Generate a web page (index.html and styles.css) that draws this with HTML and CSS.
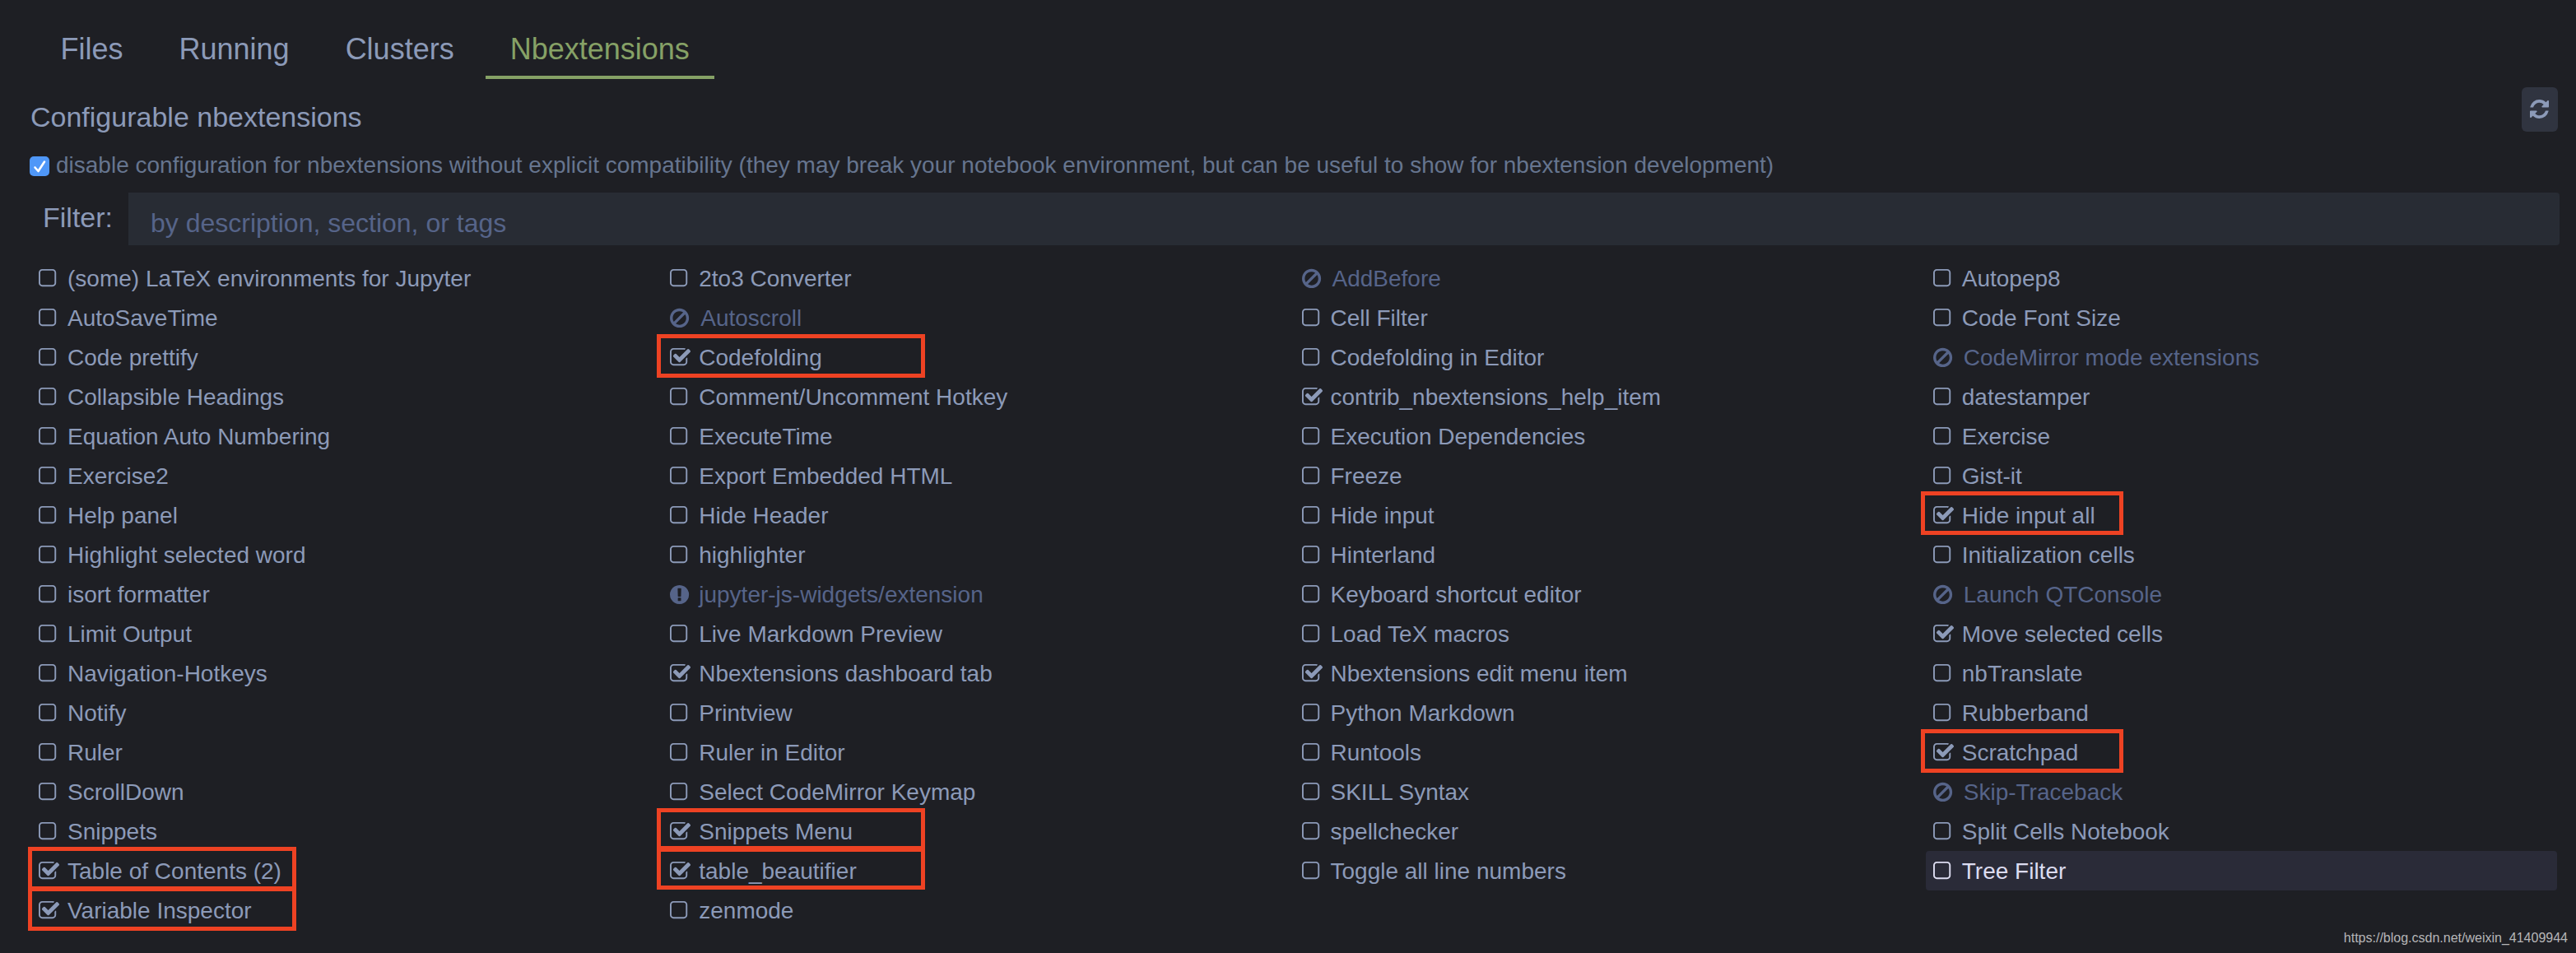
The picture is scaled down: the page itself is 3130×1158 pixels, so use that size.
FILE: index.html
```html
<!DOCTYPE html>
<html lang="en">
<head>
<meta charset="utf-8">
<title>Nbextensions</title>
<link rel="stylesheet" href="styles.css">
</head>
<body>
<svg class="defs" width="0" height="0">
  <symbol id="off" viewBox="192 0 1792 1792"><path d="M1312 256h-832q-66 0-113 47t-47 113v832q0 66 47 113t113 47h832q66 0 113-47t47-113v-832q0-66-47-113t-113-47zm288 160v832q0 119-84.5 203.5t-203.5 84.5h-832q-119 0-203.5-84.5t-84.5-203.5v-832q0-119 84.5-203.5t203.5-84.5h832q119 0 203.5 84.5t84.5 203.5z"/></symbol>
  <symbol id="on" viewBox="64 0 1792 1792"><path d="M1472 930v318q0 119-84.5 203.5t-203.5 84.5h-832q-119 0-203.5-84.5t-84.5-203.5v-832q0-119 84.5-203.5t203.5-84.5h832q63 0 117 25 15 7 18 23 3 17-9 29l-49 49q-10 10-23 10-3 0-9-2-23-6-45-6h-832q-66 0-113 47t-47 113v832q0 66 47 113t113 47h832q66 0 113-47t47-113v-254q0-13 9-22l64-64q10-10 23-10 6 0 12 3 20 8 20 29zm231-489l-814 814q-24 24-57 24t-57-24l-430-430q-24-24-24-57t24-57l110-110q24-24 57-24t57 24l263 263 647-647q24-24 57-24t57 24l110 110q24 24 24 57t-24 57z"/></symbol>
  <symbol id="ban" viewBox="128 0 1792 1792"><path d="M1440 893q0-161-87-295l-754 753q137 89 297 89 111 0 211.5-43.5t173.5-116.5 116-174.5 43-212.5zm-999 299l755-754q-135-91-300-91-148 0-273 73t-198 199-73 274q0 162 89 299zm1223-299q0 157-61 300t-163.5 246-245 164-298.5 61-298.5-61-245-164-163.5-246-61-300 61-299.5 163.5-245.5 245-164 298.5-61 298.5 61 245 164 163.5 245.5 61 299.5z"/></symbol>
  <symbol id="warn" viewBox="128 0 1792 1792"><path d="M896 128q209 0 385.5 103t279.5 279.5 103 385.5-103 385.5-279.5 279.5-385.5 103-385.5-103-279.5-279.5-103-385.5 103-385.5 279.5-279.5 385.5-103zm128 1247v-190q0-14-9-23.5t-22-9.5h-192q-13 0-23 10t-10 23v190q0 13 10 23t23 10h192q13 0 22-9.5t9-23.5zm-2-344l18-621q0-12-10-18-10-8-24-8h-220q-14 0-24 8-10 6-10 18l18 621q0 10 10 17.5t24 7.5h185q14 0 23.5-7.5t10.5-17.5z"/></symbol>
</svg>

<nav class="tabs">
  <a class="tab">Files</a>
  <a class="tab">Running</a>
  <a class="tab">Clusters</a>
  <a class="tab active">Nbextensions</a>
</nav>

<header class="head">
  <h1 class="title">Configurable nbextensions</h1>
  <button class="refresh" aria-label="Refresh"><svg viewBox="128 128 1536 1536"><path d="M1639 1056q0 5-1 7-64 268-268 434.5t-478 166.5q-146 0-282.5-55t-243.5-157l-129 129q-19 19-45 19t-45-19-19-45v-448q0-26 19-45t45-19h448q26 0 45 19t19 45-19 45l-137 137q71 66 161 102t187 36q134 0 250-65t186-179q11-17 53-117 8-23 30-23h192q13 0 22.5 9.5t9.5 22.5zm25-800v448q0 26-19 45t-45 19h-448q-26 0-45-19t-19-45 19-45l138-138q-148-137-349-137-134 0-250 65t-186 179q-11 17-53 117-8 23-30 23h-199q-13 0-22.5-9.5t-9.5-22.5v-7q65-268 270-434.5t480-166.5q146 0 284 55.5t245 156.5l130-129q19-19 45-19t45 19 19 45z"/></svg></button>
</header>

<label class="compat">
  <span class="check"><svg viewBox="0 0 24 24"><path d="M6.500 13.500l4 4.500L18 6.500"/></svg></span>
  <span>disable configuration for nbextensions without explicit compatibility (they may break your notebook environment, but can be useful to show for nbextension development)</span>
</label>

<div class="filter">
  <span class="filter-label">Filter:</span>
  <div class="filter-input">by description, section, or tags</div>
</div>

<main class="grid" id="grid"></main>

<footer class="watermark">https://blog.csdn.net/weixin_41409944</footer>
<script src="main.js"></script>
</body>
</html>
```
FILE: styles.css
```css
* {
  box-sizing: border-box;
}

body {
  margin: 0;
  height: 1158px;
  overflow: hidden;
  position: relative;
  background: #1e1f24;
  color: #8c9ab8;
  font-family: "Liberation Sans", Arial, sans-serif;
  font-size: 28px;
}

.defs {
  position: absolute;
}

svg {
  fill: currentColor;
}

.tabs {
  display: flex;
  gap: 8px;
  height: 96px;
  padding: 24px 0 0 43.5px;
}

.tab {
  padding: 15px 30px 0;
  font-size: 36px;
  line-height: 42px;
}

.tab.active {
  color: #86a166;
  border-bottom: 4px solid #86a166;
}

.head {
  display: flex;
  justify-content: space-between;
  height: 94px;
  padding: 10px 22px 0 37px;
}

.title {
  margin: 16px 0 0;
  font-size: 34px;
  line-height: 40px;
  font-weight: 400;
}

.refresh {
  display: flex;
  align-items: center;
  justify-content: center;
  width: 44px;
  height: 54px;
  padding: 0 2px 1px 0;
  border: 0;
  border-radius: 6px;
  background: #303440;
  color: #8c9ab8;
}

.refresh svg {
  width: 23px;
  height: 23px;
}

.compat {
  display: flex;
  gap: 8px;
  height: 38px;
  padding-left: 36px;
  color: #66758f;
  line-height: 22px;
  white-space: nowrap;
}

.check {
  width: 24px;
  height: 24px;
  border-radius: 5px;
  background: #4f97f8;
}

.check svg {
  display: block;
  fill: none;
  stroke: #fff;
  stroke-width: 2.6;
  stroke-linecap: round;
  stroke-linejoin: round;
}

.filter {
  display: flex;
  height: 64px;
  margin: 6px 20px 16px 52px;
}

.filter-label {
  width: 104px;
  font-size: 34px;
  line-height: 60px;
}

.filter-input {
  flex: 1;
  padding: 5px 27px 0;
  border-radius: 0 4px 4px 0;
  background: #282c34;
  color: #566489;
  font-size: 32px;
  line-height: 64px;
}

.grid {
  display: grid;
  grid-template-columns: repeat(4, 1fr);
  grid-auto-rows: 48px;
  width: 3069px;
  margin-left: 38px;
}

.item {
  position: relative;
  display: flex;
  padding-left: 9px;
  border-radius: 4px;
  line-height: 50px;
  white-space: nowrap;
}

.icon {
  width: 27px;
  height: 27px;
  margin: 11px 8px 0 0;
}

.ban,
.warn {
  color: #566489;
}

.ban .icon {
  margin-right: 10px;
}

.selected {
  background: #2a2b38;
  color: #dcdcf0;
}

/* Red annotation frames drawn over the highlighted entries */
.frame {
  position: absolute;
  top: -4px;
  left: -7px;
  width: 326px;
  height: 53px;
  border: 5px solid #ee4223;
}

.frame.wide {
  left: -4px;
}

.frame.narrow {
  left: -6px;
  width: 246px;
}

.frame.short {
  height: 51px;
}

.frame.raised {
  top: -5px;
}

.watermark {
  position: absolute;
  right: 10px;
  bottom: 8px;
  color: #b6b6b8;
  font-size: 16px;
  line-height: 20px;
}
```
FILE: main.js
```js
// One row per line, four columns. Prefix: "+" enabled, "~" incompatible, "!" missing.
const rows = `
(some) LaTeX environments for Jupyter|2to3 Converter|~AddBefore|Autopep8
AutoSaveTime|~Autoscroll|Cell Filter|Code Font Size
Code prettify|+Codefolding|Codefolding in Editor|~CodeMirror mode extensions
Collapsible Headings|Comment/Uncomment Hotkey|+contrib_nbextensions_help_item|datestamper
Equation Auto Numbering|ExecuteTime|Execution Dependencies|Exercise
Exercise2|Export Embedded HTML|Freeze|Gist-it
Help panel|Hide Header|Hide input|+Hide input all
Highlight selected word|highlighter|Hinterland|Initialization cells
isort formatter|!jupyter-js-widgets/extension|Keyboard shortcut editor|~Launch QTConsole
Limit Output|Live Markdown Preview|Load TeX macros|+Move selected cells
Navigation-Hotkeys|+Nbextensions dashboard tab|+Nbextensions edit menu item|nbTranslate
Notify|Printview|Python Markdown|Rubberband
Ruler|Ruler in Editor|Runtools|+Scratchpad
ScrollDown|Select CodeMirror Keymap|SKILL Syntax|~Skip-Traceback
Snippets|+Snippets Menu|spellchecker|Split Cells Notebook
+Table of Contents (2)|+table_beautifier|Toggle all line numbers|Tree Filter
+Variable Inspector|zenmode`.trim().split("\n");

const frames = {
  "Codefolding": "",
  "Hide input all": "narrow raised",
  "Scratchpad": "narrow",
  "Snippets Menu": "short",
  "table_beautifier": "short",
  "Table of Contents (2)": "wide raised",
  "Variable Inspector": "wide"
};
const kinds = { "+": "on", "~": "ban", "!": "warn" };

document.getElementById("grid").innerHTML = rows.flatMap(row => row.split("|")).map(entry => {
  const kind = kinds[entry[0]] || "off";
  const name = kind === "off" ? entry : entry.slice(1);
  const selected = name === "Tree Filter" ? " selected" : "";
  const frame = name in frames ? `<i class="frame ${frames[name]}"></i>` : "";
  return `<div class="item ${kind}${selected}"><svg class="icon"><use href="#${kind}"/></svg><span>${name}</span>${frame}</div>`;
}).join("");
```
